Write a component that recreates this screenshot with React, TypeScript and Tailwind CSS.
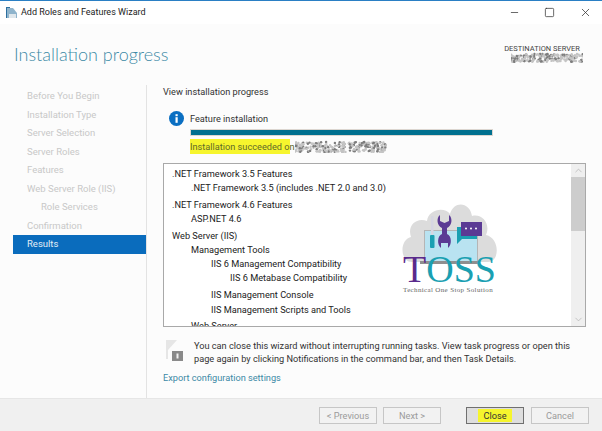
import { Minus, Square, X, ChevronUp, ChevronDown } from 'lucide-react'

const steps = [
  { label: 'Before You Begin' },
  { label: 'Installation Type' },
  { label: 'Server Selection' },
  { label: 'Server Roles' },
  { label: 'Features' },
  { label: 'Web Server Role (IIS)' },
  { label: 'Role Services', indent: true },
  { label: 'Confirmation' },
  { label: 'Results', active: true },
]

const results = [
  { text: '.NET Framework 3.5 Features', cls: 'pl-[8px] h-[14px]' },
  { text: '.NET Framework 3.5 (includes .NET 2.0 and 3.0)', cls: 'pl-[27px] h-[17px]' },
  { text: '.NET Framework 4.6 Features', cls: 'pl-[8px] h-[14px]' },
  { text: 'ASP.NET 4.6', cls: 'pl-[27px] h-[17px]' },
  { text: 'Web Server (IIS)', cls: 'pl-[8px] h-[14px]' },
  { text: 'Management Tools', cls: 'pl-[27px] h-[14px]' },
  { text: 'IIS 6 Management Compatibility', cls: 'pl-[47px] h-[14px]' },
  { text: 'IIS 6 Metabase Compatibility', cls: 'pl-[66px] h-[17px]' },
  { text: 'IIS Management Console', cls: 'pl-[47px] h-[15px]' },
  { text: 'IIS Management Scripts and Tools', cls: 'pl-[47px] h-[16px]' },
  { text: 'Web Server', cls: 'pl-[27px] h-[14px]' },
]

// Pixelated smudge used where the original screenshot blanks out a server name
function Smudge({ width, height, seed }: { width: number; height: number; seed: number }) {
  const dots = []
  let n = seed
  for (let i = 0; i < width * 3; i++) {
    n = (n * 7919 + 13) % 10007
    const x = (n % (width * 10)) / 10
    n = (n * 7919 + 13) % 10007
    const y = 2 + (n % ((height - 4) * 10)) / 10
    dots.push(<circle key={i} cx={x} cy={y} r={1.2} fill={i % 3 === 0 ? '#7d7d7d' : '#c4c4c4'} />)
  }
  return (
    <svg width={width} height={height} className="shrink-0">
      {dots}
    </svg>
  )
}

function InfoIcon() {
  return (
    <svg width="15" height="15" viewBox="0 0 15 15" className="shrink-0">
      <circle cx="7.5" cy="7.5" r="7.5" fill="#0b6fc2" />
      <rect x="6.5" y="6.2" width="2.2" height="5.6" fill="#fff" />
      <rect x="6.5" y="3.2" width="2.2" height="2" fill="#fff" />
    </svg>
  )
}

function FlagIcon() {
  return (
    <svg width="19" height="23" viewBox="0 0 19 23" className="shrink-0">
      <path d="M1 1 L1 20 L3 20 L3 11 L12 1 Z" fill="#e6e6e6" />
      <rect x="7" y="12" width="11" height="10" fill="#8a8a8a" />
      <rect x="11.5" y="14.5" width="2" height="5" fill="#f2f2f2" />
    </svg>
  )
}

function TossLogo() {
  return (
    <div className="absolute left-[236px] top-[38px] w-[100px] h-[92px]">
      <svg width="100" height="66" viewBox="0 0 100 66" className="absolute left-0 top-0">
        <path d="M12 60 C0 60 -1 38 11 35 C7 24 16 15 27 19 C28 8 44 4 50 12 C54 -2 70 0 72 14 C82 11 91 22 86 33 C100 36 100 60 88 60 Z" fill="#dcdcdc" />
        <rect x="24.5" y="28.5" width="53" height="31" fill="#b9e3f1" stroke="#b5b5b5" strokeWidth="1" />
        <rect x="20" y="59" width="60" height="3" fill="#8f8f8f" />
        <rect x="31" y="14" width="2.5" height="19" rx="1.2" fill="#d6d6e2" />
        <rect x="30" y="33" width="4.5" height="13" rx="1" fill="#1aa0b2" />
        <path d="M40 13 L40 19 L44.5 21 L49 19 L49 13 C53 16 52 24 47 26 L47 32 C52 34 52 43 48 46 L48 41 L41 41 L41 46 C37 43 37 34 42 32 L42 26 C37 24 36 16 40 13 Z" fill="#5b3a94" />
        <path d="M61 25 L57 25 L57 42 L62 37 L77 37 L77 34 L61 34 Z" fill="#1aa0b2" />
        <rect x="61" y="20" width="21" height="14" fill="#5b3a94" />
        <circle cx="66" cy="26.5" r="1" fill="#fff" />
        <circle cx="71" cy="26.5" r="1" fill="#fff" />
        <circle cx="76" cy="26.5" r="1" fill="#fff" />
      </svg>
      <div className="absolute left-[3px] top-[51px] flex font-['Liberation_Serif',serif] text-[38px] leading-[32px]">
        <span className="text-[#5a2a8c]">T</span>
        <span className="text-[#1aa0b2]">OSS</span>
      </div>
      <div className="absolute left-[3px] top-[84px] font-['Liberation_Serif',serif] text-[7px] leading-[8px] tracking-[0.35px] whitespace-nowrap text-[#666]">
        Technical One Stop Solution
      </div>
    </div>
  )
}

function FooterButton({ label, primary }: { label: string; primary?: boolean }) {
  return (
    <button
      className={`w-[58px] h-[17px] border text-[9.2px] leading-none flex items-center justify-center ${
        primary ? 'border-[#707070] bg-[#dedede] text-[#333]' : 'border-[#c6c6c6] bg-[#f2f2f2] text-[#9b9b9b]'
      }`}
    >
      {primary ? <span className="bg-[#f6f52d] px-[5px] py-[2px]">{label}</span> : label}
    </button>
  )
}

export default function App() {
  return (
    <div className="w-[602px] h-[431px] flex flex-col overflow-hidden bg-[#fcfcfc] font-['Roboto',sans-serif] text-[#333] text-[9.2px]">
      {/* Title bar */}
      <div className="h-[24px] shrink-0 bg-white border-t border-[#2a7fc4] flex items-center pl-[6px]">
        <svg width="11" height="12" viewBox="0 0 11 12" className="shrink-0">
          <rect x="0" y="0" width="4" height="11" fill="#2d6f9f" />
          <path d="M1 1 L7 1 L11 6 L11 11 L1 11 Z" fill="#8fb4cc" />
          <rect x="3" y="7" width="7" height="4" fill="#dfe7ec" />
        </svg>
        <span className="ml-[4px] text-[#222] text-[9px]">Add Roles and Features Wizard</span>
        <div className="ml-auto flex items-center text-[#333]">
          <Minus size={11} strokeWidth={1.6} className="mr-[24px]" />
          <Square size={11} strokeWidth={1.6} className="mr-[24px]" />
          <X size={13} strokeWidth={1.4} className="mr-[10px]" />
        </div>
      </div>

      {/* Header */}
      <div className="h-[61px] shrink-0 flex justify-between pl-[14px] pr-[19px]">
        <h1 className="mt-[16px] text-[18px] leading-[28px] text-[#3d8aa6] font-['Lato',sans-serif] font-light">Installation progress</h1>
        <div className="mt-[20px] flex flex-col items-end">
          <span className="text-[7.5px] leading-[9px] text-[#444] mr-[3px]">DESTINATION SERVER</span>
          <div className="-mt-[1px]">
            <Smudge width={72} height={12} seed={17} />
          </div>
        </div>
      </div>

      {/* Body */}
      <div className="flex-1 min-h-0 flex">
        <nav className="w-[147px] shrink-0 pl-[13px] mr-[16px] border-r border-[#e3e3e3]">
          <ul className="w-[133px] flex flex-col pt-[2px]">
            {steps.map(step => (
              <li
                key={step.label}
                className={`h-[18.5px] flex items-center text-[9.5px] whitespace-nowrap ${step.indent ? 'pl-[28px]' : 'pl-[14px]'} ${
                  step.active ? 'bg-[#0a6cbd] text-[#e4eef6]' : 'text-[#c8c8c8]'
                }`}
              >
                {step.label}
              </li>
            ))}
          </ul>
        </nav>

        <main className="flex-1 min-w-0 pr-[17px]">
          <p className="h-[15px] leading-[15px] -mt-[1px]">View installation progress</p>
          <div className="mt-[12px] flex items-center gap-[6px] pl-[6px]">
            <InfoIcon />
            <span>Feature installation</span>
          </div>
          <div className="mt-[3px] ml-[27px] w-[303px] h-[7px] bg-[#00708f] border border-[#dcd6d0]" />
          <div className="mt-[4px] ml-[27px] flex items-center h-[14px]">
            <span className="leading-[14px] text-[#5f6a2a] whitespace-nowrap">
              <span className="bg-[#f6f52d] py-[2px]">Installation succeeded o</span>n
            </span>
            <Smudge width={92} height={14} seed={41} />
          </div>

          {/* Result list */}
          <div className="relative mt-[9px] w-[423px] h-[164px] border border-[#a9a9a9] bg-white flex">
            <div className="flex-1 min-w-0 overflow-hidden pt-[3px]">
              {results.map(row => (
                <div key={row.text} className={`${row.cls} leading-[14px] text-[#222] whitespace-nowrap`}>
                  {row.text}
                </div>
              ))}
            </div>
            <div className="w-[14px] shrink-0 bg-[#efefef] flex flex-col items-center">
              <ChevronUp size={11} strokeWidth={1.2} className="text-[#a0a0a0] mt-[1px]" />
              <div className="w-full h-[54px] bg-[#cdcdcd] mt-[1px]" />
              <ChevronDown size={11} strokeWidth={1.2} className="text-[#a0a0a0] mt-auto mb-[1px]" />
            </div>
            <TossLogo />
          </div>

          <div className="mt-[12px] flex gap-[10px] pl-[2px]">
            <FlagIcon />
            <p className="leading-[13px] w-[385px]">
              You can close this wizard without interrupting running tasks. View task progress or open this page again by clicking Notifications in the command bar, and then Task Details.
            </p>
          </div>
          <a className="block mt-[6px] text-[#3d8aa6]">Export configuration settings</a>
        </main>
      </div>

      {/* Footer */}
      <div className="h-[33px] shrink-0 bg-[#f0f0f0] border-t border-[#e6e6e6] flex items-center pl-[319px] pt-[1px]">
        <FooterButton label="< Previous" />
        <div className="ml-[6px]">
          <FooterButton label="Next >" />
        </div>
        <div className="ml-[25px]">
          <FooterButton label="Close" primary />
        </div>
        <div className="ml-[7px]">
          <FooterButton label="Cancel" />
        </div>
      </div>
    </div>
  )
}
